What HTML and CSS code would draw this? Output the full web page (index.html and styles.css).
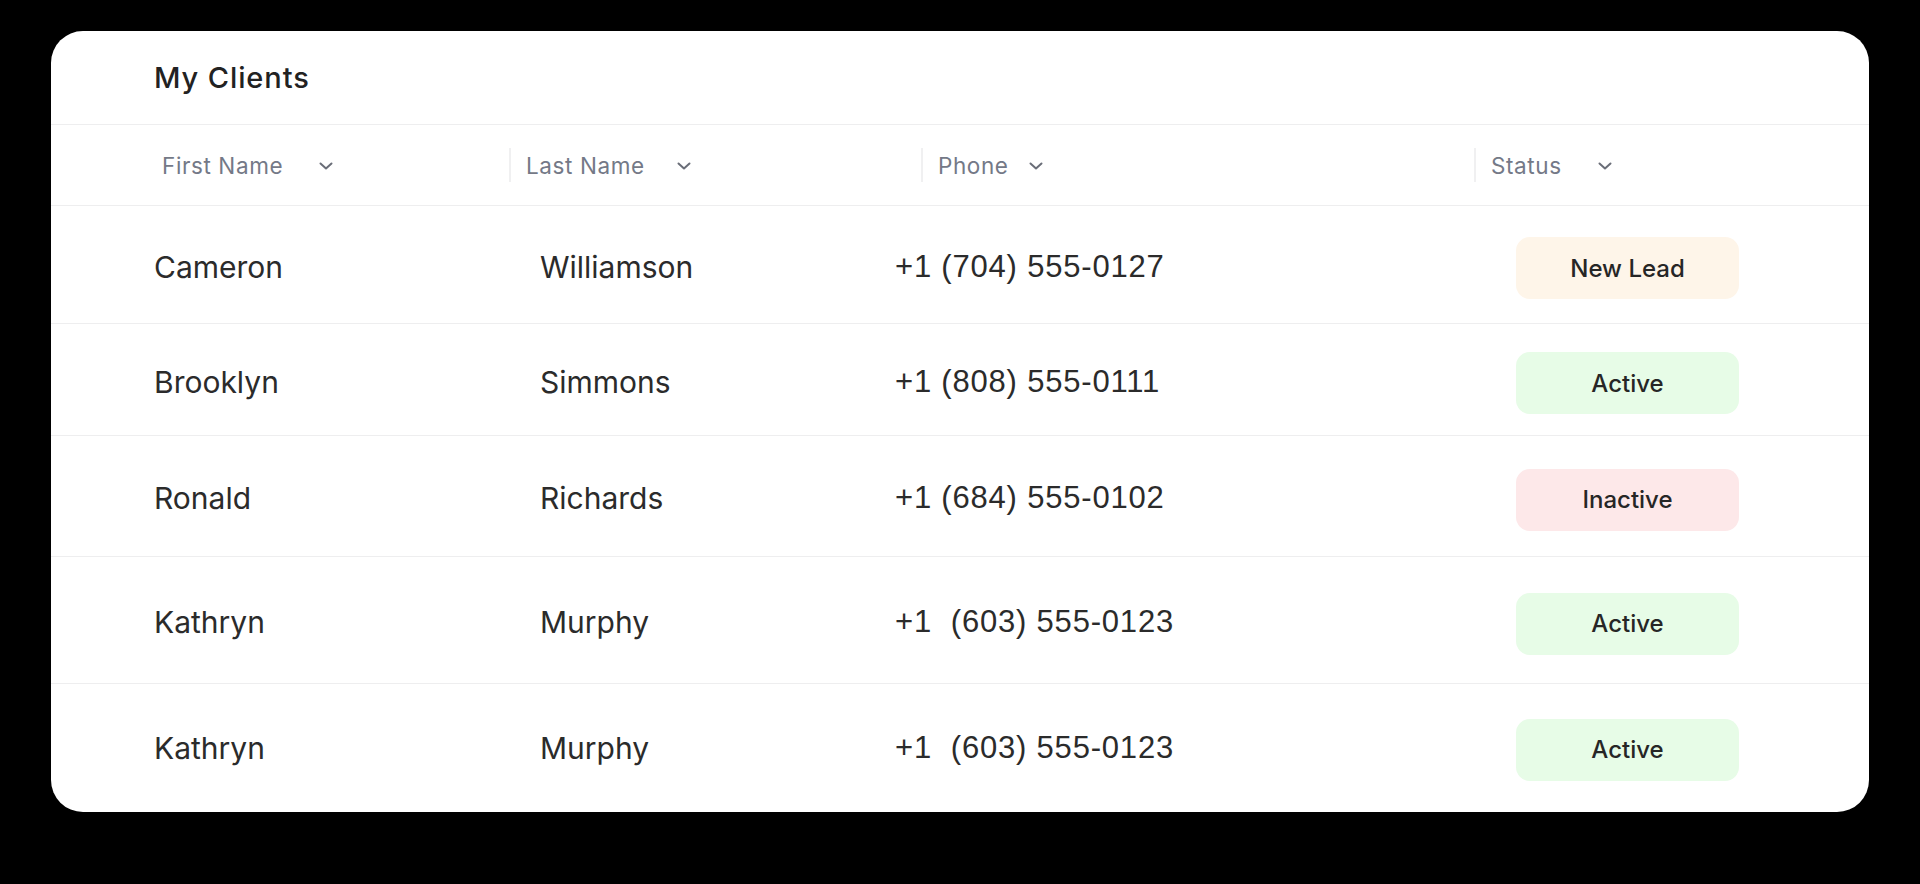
FILE: index.html
```html
<!DOCTYPE html>
<html lang="en">
<head>
<meta charset="utf-8">
<title>My Clients</title>
<link rel="stylesheet" href="styles.css">
</head>
<body>
<main class="card">
  <header class="card-title">
    <h1>My Clients</h1>
  </header>
  <div class="table-head">
    <div class="th th-first"><span>First Name</span><svg class="chev" viewBox="0 0 14 8"><path d="M1.5 1.5 L7 6.5 L12.5 1.5"/></svg></div>
    <div class="th th-sep th-mid"><span>Last Name</span><svg class="chev" viewBox="0 0 14 8"><path d="M1.5 1.5 L7 6.5 L12.5 1.5"/></svg></div>
    <div class="th th-sep th-tight"><span>Phone</span><svg class="chev" viewBox="0 0 14 8"><path d="M1.5 1.5 L7 6.5 L12.5 1.5"/></svg></div>
    <div class="th th-sep"><span>Status</span><svg class="chev" viewBox="0 0 14 8"><path d="M1.5 1.5 L7 6.5 L12.5 1.5"/></svg></div>
  </div>
  <div class="rows">
    <div class="row">
      <div class="td">Cameron</div>
      <div class="td">Williamson</div>
      <div class="td phone">+1 (704) 555-0127</div>
      <div class="td"><span class="badge badge-lead">New Lead</span></div>
    </div>
    <div class="row">
      <div class="td">Brooklyn</div>
      <div class="td">Simmons</div>
      <div class="td phone">+1 (808) 555-0111</div>
      <div class="td"><span class="badge badge-active">Active</span></div>
    </div>
    <div class="row">
      <div class="td">Ronald</div>
      <div class="td">Richards</div>
      <div class="td phone">+1 (684) 555-0102</div>
      <div class="td"><span class="badge badge-inactive">Inactive</span></div>
    </div>
    <div class="row">
      <div class="td">Kathryn</div>
      <div class="td">Murphy</div>
      <div class="td phone">+1&nbsp; (603) 555-0123</div>
      <div class="td"><span class="badge badge-active">Active</span></div>
    </div>
    <div class="row">
      <div class="td">Kathryn</div>
      <div class="td">Murphy</div>
      <div class="td phone">+1&nbsp; (603) 555-0123</div>
      <div class="td"><span class="badge badge-active">Active</span></div>
    </div>
  </div>
</main>
</body>
</html>
```

FILE: styles.css
```css
* { box-sizing: border-box; }

html, body {
  margin: 0;
  padding: 0;
  background: #000;
}

body {
  font-family: "Inter", "Liberation Sans", Arial, sans-serif;
  color: #2a2a2a;
  padding: 31px 0 0 51px;
  height: 884px;
  overflow: hidden;
}

.card {
  width: 1818px;
  height: 781px;
  background: #fff;
  border-radius: 32px;
  overflow: hidden;
  display: flex;
  flex-direction: column;
}

.card-title {
  height: 94px;
  flex: none;
  display: flex;
  align-items: center;
  padding-left: 103px;
  border-bottom: 1px solid #eeeeef;
}

.card-title h1 {
  margin: 0;
  font-size: 29px;
  font-weight: 500;
  color: #222;
  letter-spacing: 0.9px;
}

.table-head {
  height: 81px;
  flex: none;
  display: grid;
  grid-template-columns: 347px 412px 553px 1fr;
  align-items: center;
  padding-left: 111px;
  border-bottom: 1px solid #eeeeef;
}

.th {
  display: flex;
  align-items: center;
  gap: 36px;
  font-size: 22.5px;
  letter-spacing: 0.6px;
  color: #747987;
  height: 34px;
}

.th-sep {
  border-left: 2px solid #f0f0f1;
  padding-left: 15px;
}

.th-mid { gap: 32px; }
.th-tight { gap: 20px; }

.chev {
  width: 14px;
  height: 8px;
  fill: none;
  stroke: #6a6e78;
  stroke-width: 2;
  stroke-linecap: round;
  stroke-linejoin: round;
  margin-top: 2px;
}

.rows {
  flex: 1;
  display: flex;
  flex-direction: column;
}

.row {
  display: grid;
  grid-template-columns: 386px 355px 621px 223px;
  align-items: center;
  padding-left: 103px;
  border-bottom: 1px solid #eeeeef;
  padding-top: 4px;
}

.row:nth-child(1) { height: 118px; }
.row:nth-child(2) { height: 112px; }
.row:nth-child(3) { height: 121px; }
.row:nth-child(4) { height: 127px; }
.row:nth-child(5) { height: 128px; border-bottom: none; padding-top: 0; }

.td {
  font-size: 30px;
  color: #2b2b2b;
}

.phone {
  font-family: "Liberation Sans", Arial, sans-serif;
  font-size: 31px;
  letter-spacing: 0.8px;
  white-space: pre;
}

.badge {
  display: flex;
  align-items: center;
  justify-content: center;
  width: 223px;
  height: 62px;
  border-radius: 14px;
  font-size: 24px;
  font-weight: 500;
  color: #262626;
  margin-top: 3px;
}

.badge-lead { background: #fef5e9; }
.badge-active { background: #e7fce7; }
.badge-inactive { background: #fde8e9; }
```
